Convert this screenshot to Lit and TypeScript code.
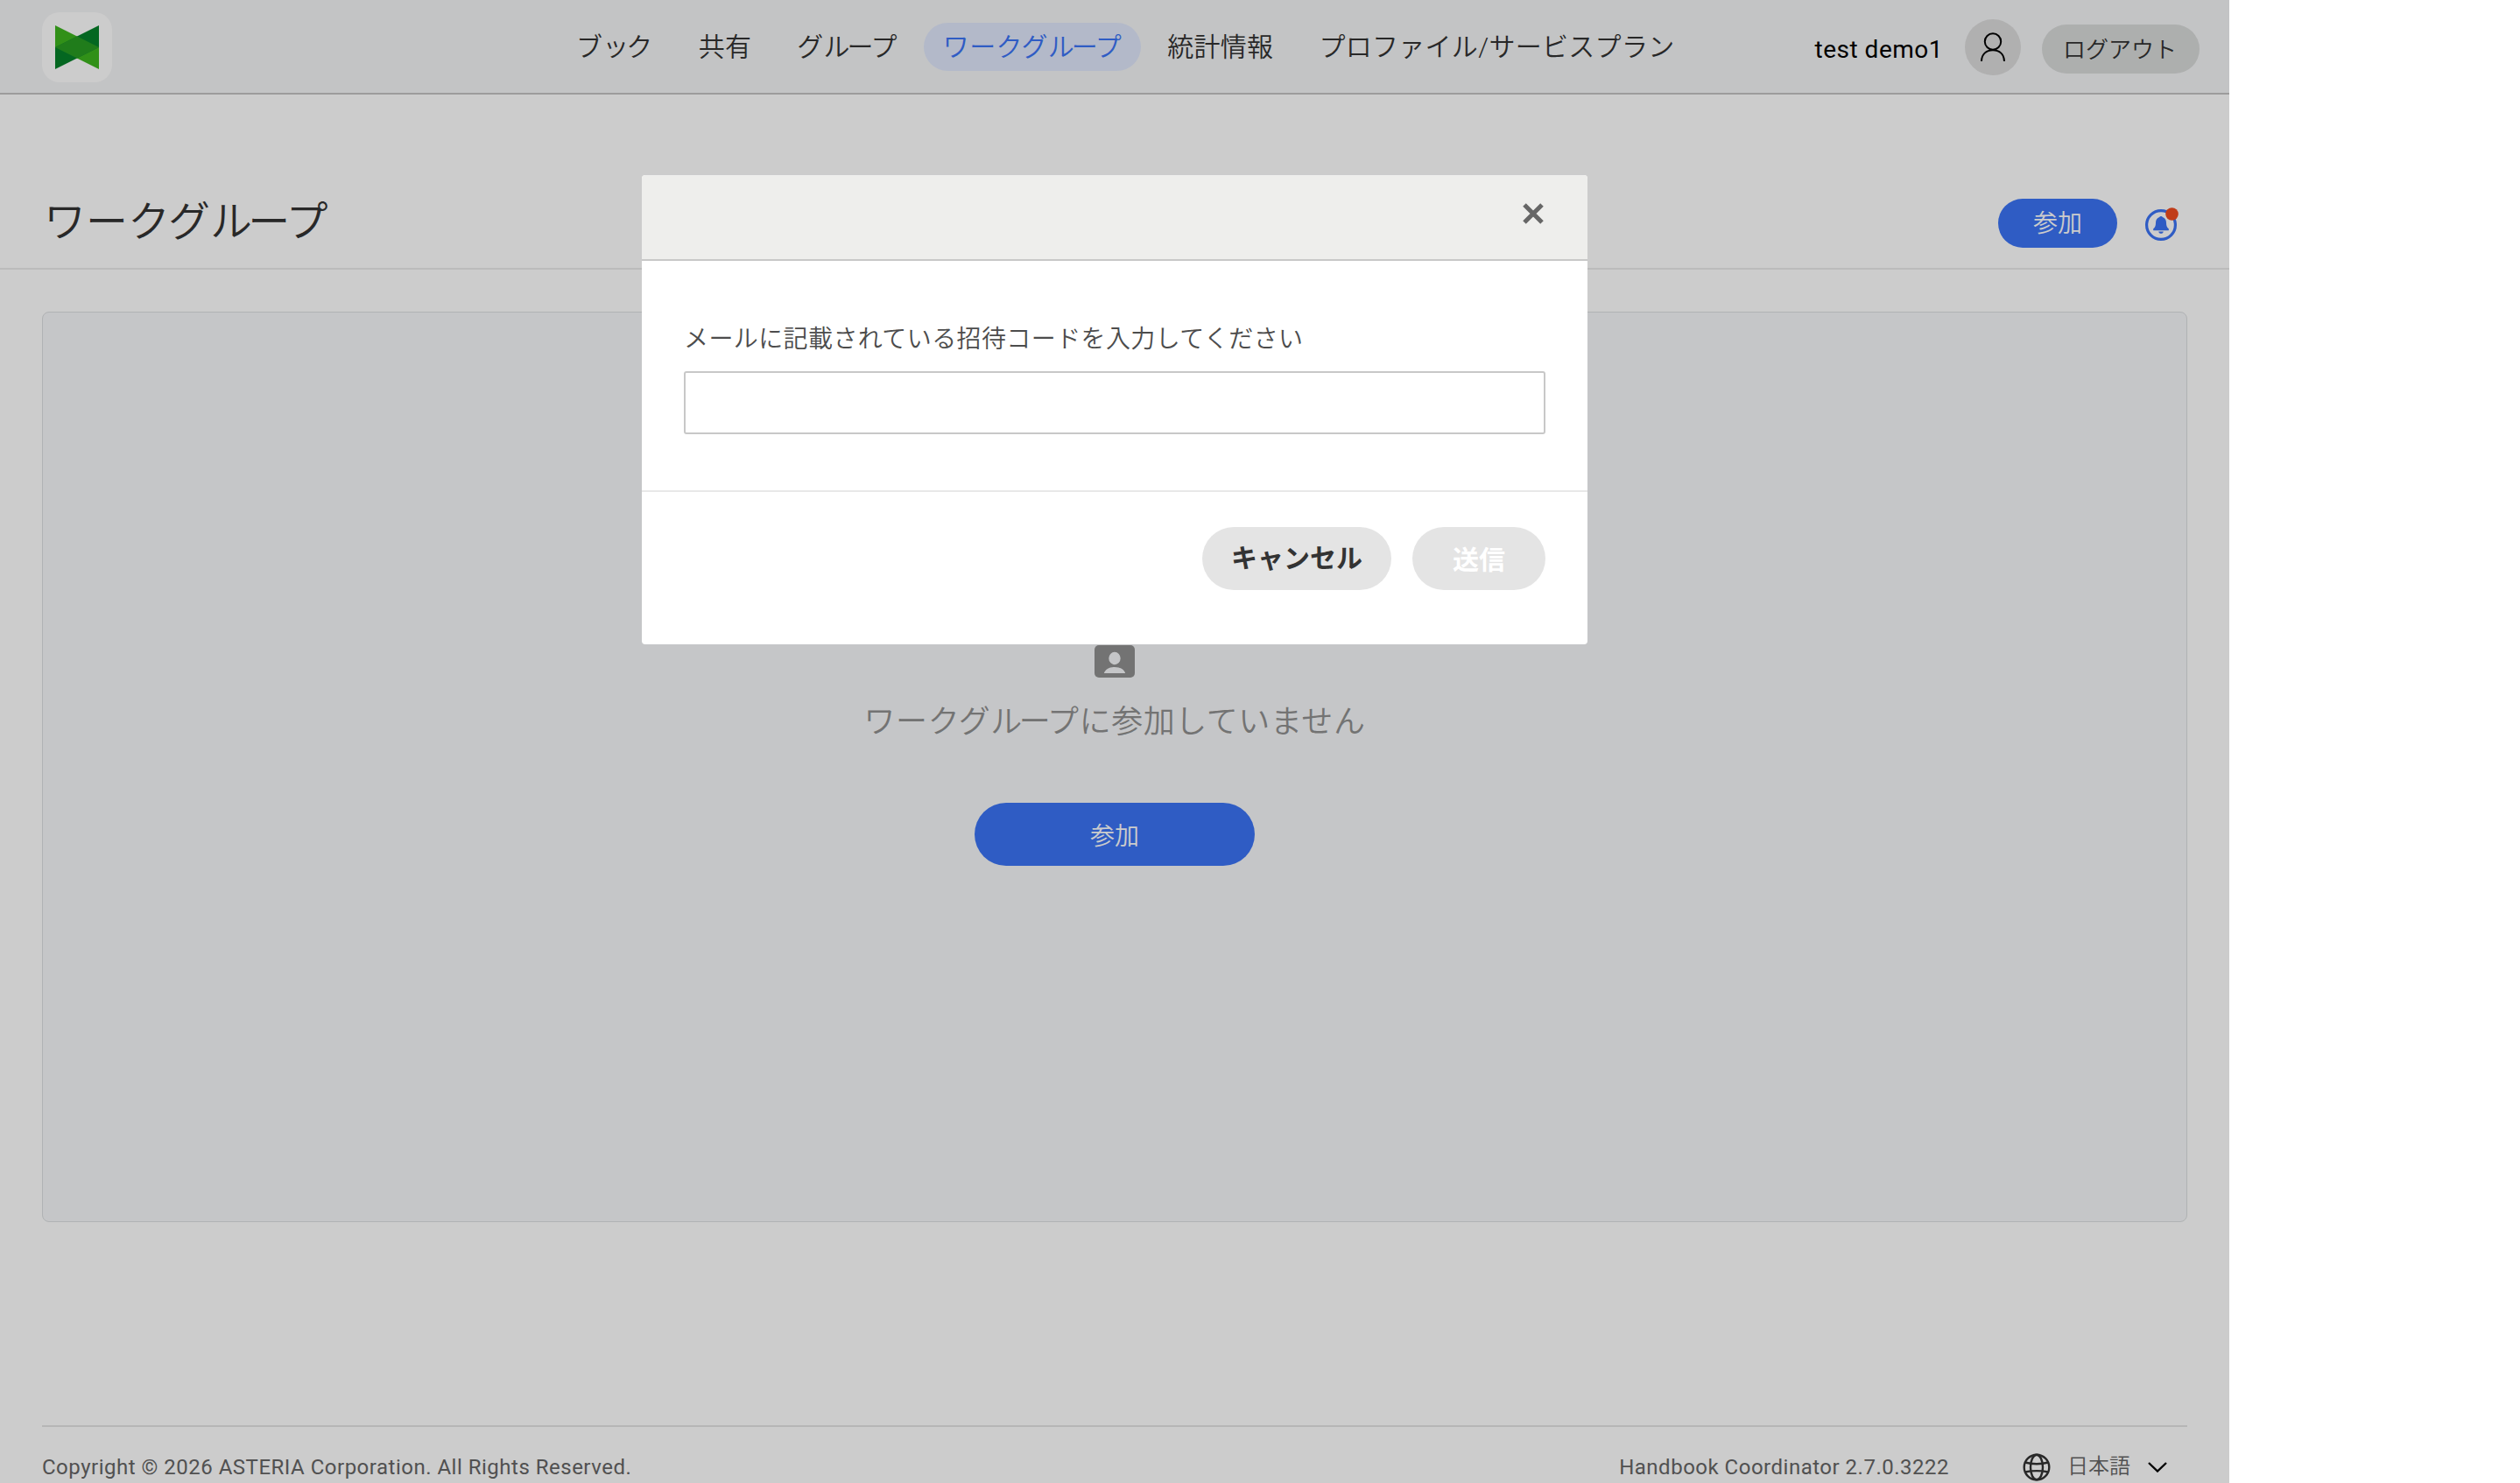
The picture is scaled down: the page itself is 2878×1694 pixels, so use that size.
import { LitElement, html, css, svg } from 'lit'
import { customElement, state } from 'lit/decorators.js'
import { classMap } from 'lit/directives/class-map.js'

const NAV = [
  { id: 'book', label: 'ブック' },
  { id: 'share', label: '共有' },
  { id: 'group', label: 'グループ' },
  { id: 'workgroup', label: 'ワークグループ' },
  { id: 'stats', label: '統計情報' },
  { id: 'profile', label: 'プロファイル/サービスプラン' },
]

// the CJK face has no pair kerning, so loose katakana pairs are pulled together here
function kern(text: string) {
  return text
    .split(/(ルー(?=プ)|ッ(?=ク))/)
    .map((part, i) => (i % 2 ? html`<span class="tight">${part}</span>` : part))
}

const logoIcon = svg`
  <svg class="logo-mark" viewBox="0 0 50 50">
    <path fill="#3eb51f" d="M0 0 50 25V50L0 25Z" />
    <path fill="#06812a" d="M50 0V25L0 50V25Z" />
    <path fill="#299c22" d="M25 12.5 50 25 25 37.5 0 25Z" />
  </svg>`

const userIcon = svg`
  <svg class="user-icon" viewBox="0 0 28 34" fill="none" stroke="#000" stroke-width="2">
    <circle cx="14" cy="10.5" r="9.2" />
    <path d="M1 33C1 25 6.5 20.2 14 20.2S27 25 27 33" />
  </svg>`

const bellIcon = svg`
  <svg class="bell-icon" viewBox="0 0 38 40">
    <circle cx="18" cy="22" r="16.4" fill="none" stroke="#3b74f6" stroke-width="3.2" />
    <path fill="#3b74f6" d="M18 12c-.9 0-1.5.4-1.8 1-2.9 1-4.2 3.4-4.2 6.5 0 3.5-.8 5.2-2.5 6.5-.5.4-.5 2.2 0 2.2h17c.5 0 .5-1.8 0-2.2-1.7-1.3-2.5-3-2.5-6.5 0-3.1-1.3-5.5-4.2-6.5-.3-.6-.9-1-1.8-1Z" />
    <path fill="#3b74f6" d="M15.2 29.5h5.6c-.3 1.5-1.4 2.3-2.8 2.3s-2.5-.8-2.8-2.3Z" />
    <circle cx="30.5" cy="9.5" r="7.3" fill="#f04b1f" />
  </svg>`

const closeIcon = svg`
  <svg class="close-icon" viewBox="0 0 24 24" stroke="#666" stroke-width="5">
    <path d="M2 2 22 22M22 2 2 22" />
  </svg>`

const memberIcon = svg`
  <svg class="member-icon" viewBox="0 0 46 37">
    <rect width="46" height="37" rx="5" fill="#909090" />
    <ellipse cx="23" cy="15" rx="6.7" ry="7.2" fill="#f7f8fa" />
    <path fill="#f7f8fa" d="M10.8 32c1.5-4.5 6-7 12.2-7s10.7 2.5 12.2 7Z" />
  </svg>`

const globeIcon = svg`
  <svg class="globe-icon" viewBox="0 0 32 32" fill="none" stroke="#333" stroke-width="2.4">
    <circle cx="16" cy="16" r="14.3" />
    <ellipse cx="16" cy="16" rx="7" ry="14.3" />
    <path d="M3 10.5C10 12.8 22 12.8 29 10.5M3 21.5C10 19.7 22 19.7 29 21.5" />
  </svg>`

const chevronIcon = svg`
  <svg class="chevron-icon" viewBox="0 0 22 12" fill="none" stroke="#000" stroke-width="2.4">
    <path d="M1 1 11 10.5 21 1" />
  </svg>`

@customElement('app-root')
export class AppRoot extends LitElement {
  static styles = css`
    :host {
      display: block;
      width: 2878px;
      height: 1694px;
      overflow: hidden;
      background: #fff;
      color: #333;
      font-family: Roboto, 'Noto Sans CJK JP', sans-serif;
      font-weight: 350;
    }

    * { box-sizing: border-box; }
    svg { display: block; flex: none; }

    button {
      border: none;
      padding: 0;
      font: inherit;
      color: inherit;
      cursor: pointer;
      white-space: nowrap;
    }

    .page {
      position: relative;
      width: 2546px;
      height: 1694px;
      overflow: hidden;
    }

    .tight { letter-spacing: -0.1em; }

    header {
      display: flex;
      height: 108px;
      padding: 0 34px 0 48px;
      background: #f4f5f7;
      border-bottom: 2px solid #c4c4c4;
    }

    .logo {
      width: 80px;
      height: 80px;
      margin-top: 14px;
      padding: 15px;
      border-radius: 20px;
      background: #fff;
    }
    .logo-mark { width: 50px; height: 50px; }

    nav {
      display: flex;
      gap: 8px;
      margin-left: 508px;
      padding-top: 26px;
    }

    .nav-link {
      height: 55px;
      padding: 0 22px;
      border-radius: 28px;
      background: none;
      font-size: 30px;
      line-height: 53px;
      letter-spacing: 0.3px;
    }
    .nav-link.active {
      background: #e0e8fc;
      color: #3b74f6;
    }

    .account {
      display: flex;
      flex: 1;
      justify-content: flex-end;
      height: 64px;
      margin-top: 22px;
    }
    .user-name {
      margin-right: 25px;
      color: #000;
      font-size: 28px;
      font-weight: 400;
      line-height: 70px;
      letter-spacing: 0.5px;
    }
    .avatar {
      display: flex;
      justify-content: center;
      width: 64px;
      height: 64px;
      margin-right: 24px;
      padding-top: 15px;
      border-radius: 50%;
      background: #dcdcdc;
    }
    .user-icon { width: 28px; height: 34px; }
    .logout {
      width: 180px;
      height: 56px;
      margin-top: 6px;
      padding: 0 2px 4px 0;
      border-radius: 28px;
      background: #d9dbda;
      font-size: 26px;
    }

    .title-bar {
      display: flex;
      align-items: center;
      height: 200px;
      padding: 96px 58px 0 50px;
      border-bottom: 2px solid #eaeaea;
    }
    h1 {
      flex: 1;
      margin: 0;
      padding-bottom: 12px;
      font-size: 48px;
      font-weight: inherit;
    }

    .primary {
      background: #3b74f6;
      color: #fff;
      font-size: 28px;
    }
    .join {
      width: 136px;
      height: 56px;
      margin-right: 32px;
      padding-bottom: 4px;
      border-radius: 28px;
    }
    .bell-icon { width: 38px; height: 40px; }

    .panel {
      display: flex;
      flex-direction: column;
      align-items: center;
      height: 1040px;
      margin: 48px 48px 0;
      padding-top: 380px;
      border: 1px solid #dcdfe1;
      border-radius: 8px;
      background: #f7f8fa;
    }
    .member-icon { width: 46px; height: 37px; }
    .empty-text {
      margin: 24px 0 0;
      color: #909090;
      font-size: 36px;
      line-height: 54px;
      letter-spacing: 0.55px;
    }
    .join-large {
      width: 320px;
      height: 72px;
      margin-top: 65px;
      border-radius: 36px;
    }

    footer {
      display: flex;
      align-items: center;
      height: 94px;
      margin: 232px 48px 0;
      padding-right: 23px;
      border-top: 2px solid #e4e4e4;
      color: #666;
      font-size: 24px;
    }
    .copyright { flex: 1; }
    .copyright, .version { font-weight: 400; letter-spacing: 0.5px; }
    .globe-icon { width: 32px; height: 32px; margin: 0 19px 0 84px; }
    .language { margin-right: 20px; line-height: 36px; padding-bottom: 2px; }
    .chevron-icon { width: 22px; height: 12px; }

    .overlay {
      position: absolute;
      inset: 0;
      display: flex;
      justify-content: center;
      align-items: flex-start;
      padding-top: 200px;
      background: rgba(0, 0, 0, 0.2);
    }

    .dialog {
      width: 1080px;
      height: 536px;
      overflow: hidden;
      border-radius: 4px;
      background: #fff;
    }
    .dialog-header {
      display: flex;
      justify-content: flex-end;
      height: 98px;
      padding: 32px 50px 0 0;
      background: #eeeeec;
      border-bottom: 2px solid #c8c8c8;
    }
    .close { height: 24px; background: none; }
    .close-icon { width: 24px; height: 24px; }
    .dialog-body {
      height: 264px;
      padding: 69px 48px 0;
      border-bottom: 2px solid #e8e8e8;
    }
    label {
      display: block;
      height: 57px;
      color: #4c4c4c;
      font-size: 28px;
      line-height: 42px;
      letter-spacing: 0.4px;
    }
    input {
      display: block;
      width: 100%;
      height: 72px;
      border: 2px solid #c8c8c8;
      border-radius: 3px;
      background: #fff;
      font: inherit;
      outline: none;
    }
    .dialog-footer {
      display: flex;
      justify-content: flex-end;
      gap: 24px;
      padding: 40px 48px 0;
    }
    .dialog-footer button {
      height: 72px;
      border-radius: 36px;
      background: #e4e4e4;
      font-size: 30px;
      font-weight: 700;
    }
    .dialog-footer .cancel { width: 216px; padding-bottom: 7px; }
    .dialog-footer .send { width: 152px; padding-bottom: 2px; }
    .send:disabled { color: #fff; }
  `

  @state() private current = 'workgroup'
  @state() private dialogOpen = true
  @state() private code = ''

  private _open() {
    this.dialogOpen = true
  }

  private _close() {
    this.dialogOpen = false
    this.code = ''
  }

  private _onInput(e: Event) {
    this.code = (e.target as HTMLInputElement).value
  }

  private _dialog() {
    return html`
      <div class="overlay">
        <div class="dialog" role="dialog">
          <div class="dialog-header">
            <button class="close" @click=${this._close}>${closeIcon}</button>
          </div>
          <div class="dialog-body">
            <label for="code">メールに記載されている招待コードを入力してください</label>
            <input id="code" .value=${this.code} @input=${this._onInput} />
          </div>
          <div class="dialog-footer">
            <button class="cancel" @click=${this._close}>キャンセル</button>
            <button class="send" ?disabled=${!this.code}>送信</button>
          </div>
        </div>
      </div>
    `
  }

  render() {
    return html`
      <div class="page" lang="ja">
        <header>
          <div class="logo">${logoIcon}</div>
          <nav>
            ${NAV.map(
              (n) => html`
                <button
                  class=${classMap({ 'nav-link': true, active: n.id === this.current })}
                  @click=${() => (this.current = n.id)}
                >${kern(n.label)}</button>
              `
            )}
          </nav>
          <div class="account">
            <span class="user-name">test demo1</span>
            <span class="avatar">${userIcon}</span>
            <button class="logout">ログアウト</button>
          </div>
        </header>

        <div class="title-bar">
          <h1>${kern('ワークグループ')}</h1>
          <button class="primary join" @click=${this._open}>参加</button>
          ${bellIcon}
        </div>

        <section class="panel">
          ${memberIcon}
          <p class="empty-text">${kern('ワークグループに参加していません')}</p>
          <button class="primary join-large" @click=${this._open}>参加</button>
        </section>

        <footer>
          <span class="copyright">Copyright © 2026 ASTERIA Corporation. All Rights Reserved.</span>
          <span class="version">Handbook Coordinator 2.7.0.3222</span>
          ${globeIcon}
          <span class="language">日本語</span>
          ${chevronIcon}
        </footer>

        ${this.dialogOpen ? this._dialog() : ''}
      </div>
    `
  }
}
